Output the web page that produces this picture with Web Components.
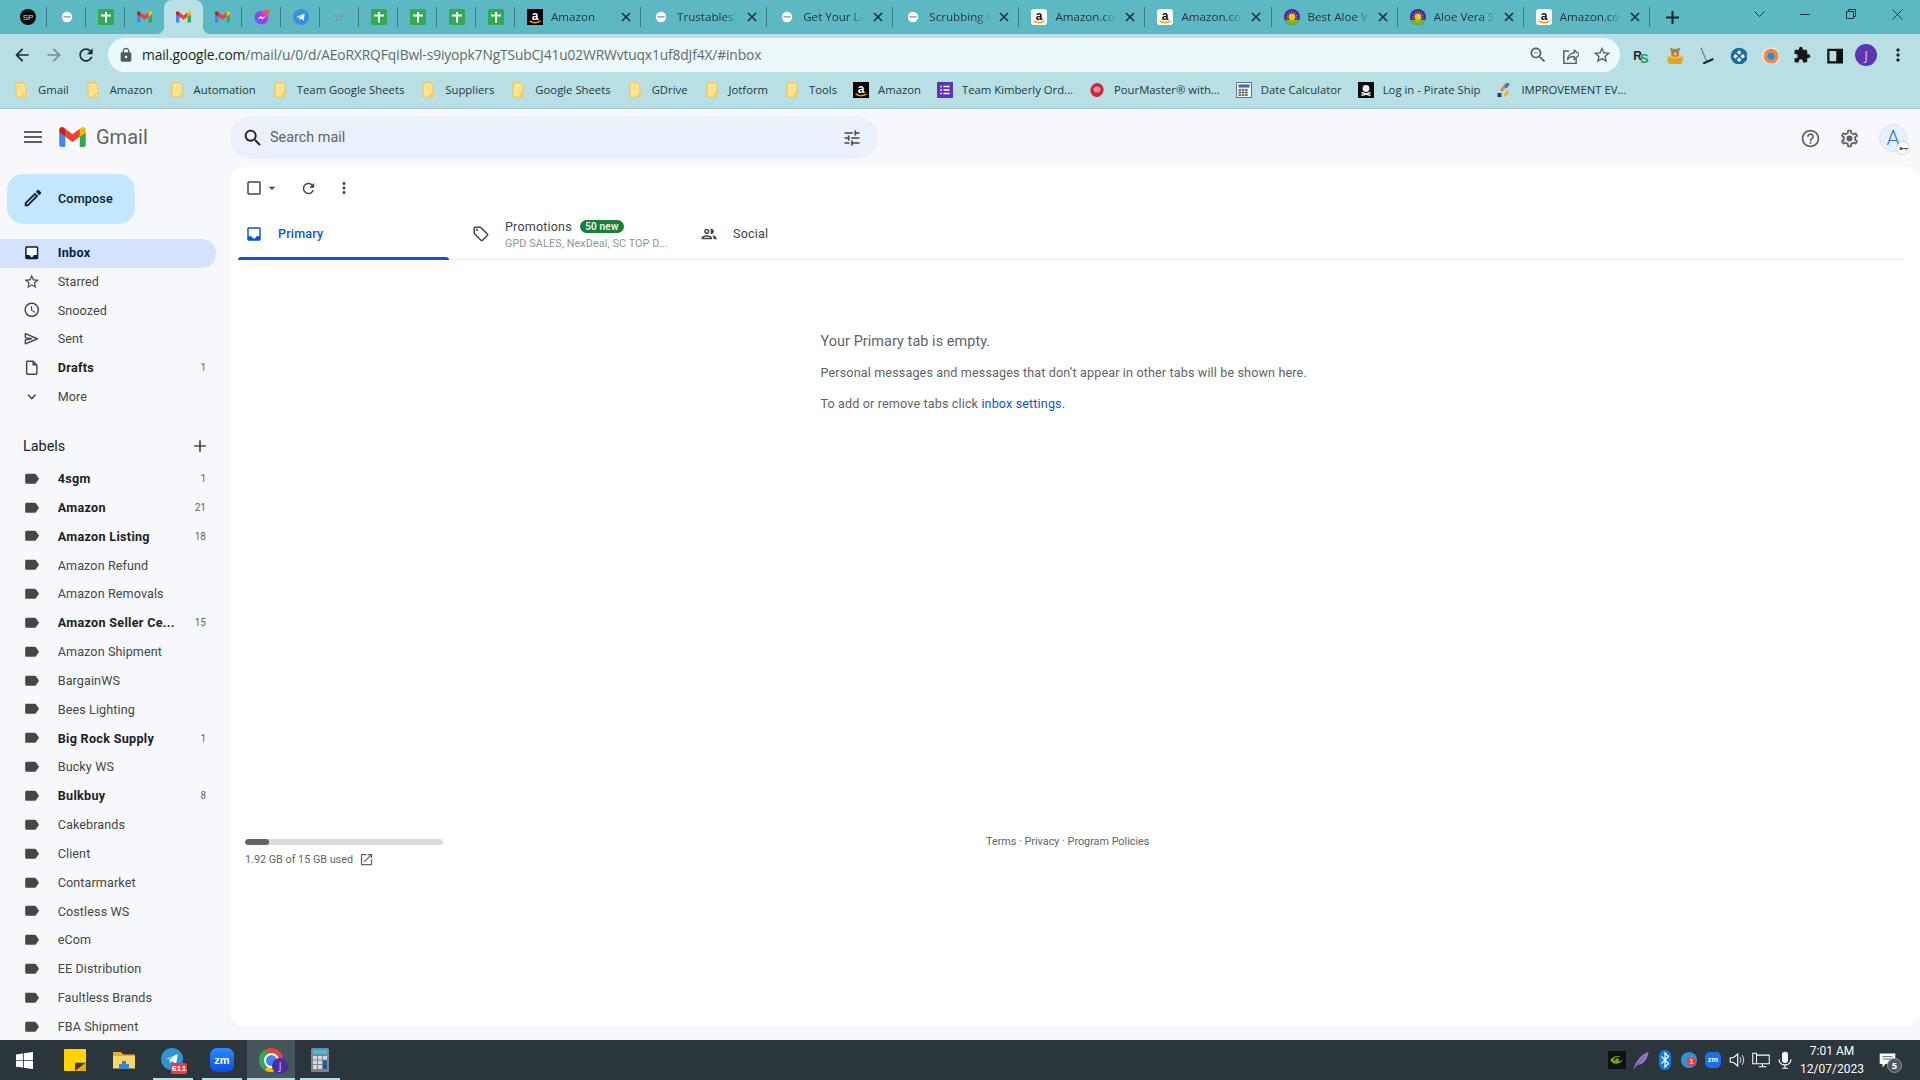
<!DOCTYPE html>
<html lang="en">
<head>
<meta charset="utf-8">
<title>Gmail</title>
<style>
  html, body { margin: 0; height: 100%; }
  body { width: 1920px; height: 1080px; overflow: hidden; display: flex; flex-direction: column; font-family: Roboto, "Liberation Sans", sans-serif; background: #f6f8fc; }
</style>
</head>
<body>
<chrome-tabstrip></chrome-tabstrip>
<chrome-toolbar></chrome-toolbar>
<chrome-bookmarks></chrome-bookmarks>
<gmail-app></gmail-app>
<win-taskbar></win-taskbar>

<script>
// material icon paths
const P = {
  menu: 'M3 18h18v-2H3v2zm0-5h18v-2H3v2zm0-7v2h18V6H3z',
  search: 'M15.5 14h-.79l-.28-.27C15.41 12.59 16 11.11 16 9.5 16 5.91 13.09 3 9.5 3S3 5.91 3 9.5 5.91 16 9.5 16c1.61 0 3.09-.59 4.23-1.57l.27.28v.79l5 4.99L20.49 19l-4.99-5zm-6 0C7.01 14 5 11.99 5 9.5S7.01 5 9.5 5 14 7.01 14 9.5 11.99 14 9.5 14z',
  tune: 'M3 17v2h6v-2H3zM3 5v2h10V5H3zm10 16v-2h8v-2h-8v-2h-2v6h2zM7 9v2H3v2h4v2h2V9H7zm14 4v-2H11v2h10zm-6-4h2V7h4V5h-4V3h-2v6z',
  help: 'M11 18h2v-2h-2v2zm1-16C6.48 2 2 6.48 2 12s4.48 10 10 10 10-4.48 10-10S17.52 2 12 2zm0 18c-4.41 0-8-3.59-8-8s3.59-8 8-8 8 3.59 8 8-3.59 8-8 8zm0-14c-2.21 0-4 1.79-4 4h2c0-1.1.9-2 2-2s2 .9 2 2c0 2-3 1.75-3 5h2c0-2.25 3-2.5 3-5 0-2.21-1.79-4-4-4z',
  settings: 'M19.43 12.98c.04-.32.07-.64.07-.98 0-.34-.03-.66-.07-.98l2.11-1.65c.19-.15.24-.42.12-.64l-2-3.46c-.09-.16-.26-.25-.44-.25-.06 0-.12.01-.17.03l-2.49 1c-.52-.4-1.08-.73-1.69-.98l-.38-2.65C14.46 2.18 14.25 2 14 2h-4c-.25 0-.46.18-.49.42l-.38 2.65c-.61.25-1.17.59-1.69.98l-2.49-1c-.06-.02-.12-.03-.18-.03-.17 0-.34.09-.43.25l-2 3.46c-.13.22-.07.49.12.64l2.11 1.65c-.04.32-.07.65-.07.98 0 .33.03.66.07.98l-2.11 1.65c-.19.15-.24.42-.12.64l2 3.46c.09.16.26.25.44.25.06 0 .12-.01.17-.03l2.49-1c.52.4 1.08.73 1.69.98l.38 2.65c.03.24.24.42.49.42h4c.25 0 .46-.18.49-.42l.38-2.65c.61-.25 1.17-.59 1.69-.98l2.49 1c.06.02.12.03.18.03.17 0 .34-.09.43-.25l2-3.46c.12-.22.07-.49-.12-.64l-2.11-1.65zm-1.98-1.71c.04.31.05.52.05.73 0 .21-.02.43-.05.73l-.14 1.13.89.7 1.08.84-.7 1.21-1.27-.51-1.04-.42-.9.68c-.43.32-.84.56-1.25.73l-1.06.43-.16 1.13-.2 1.35h-1.4l-.19-1.35-.16-1.13-1.06-.43c-.43-.18-.83-.41-1.23-.71l-.91-.7-1.06.43-1.27.51-.7-1.21 1.08-.84.89-.7-.14-1.13c-.03-.31-.05-.54-.05-.74s.02-.43.05-.73l.14-1.13-.89-.7-1.08-.84.7-1.21 1.27.51 1.04.42.9-.68c.43-.32.84-.56 1.25-.73l1.06-.43.16-1.13.2-1.35h1.39l.19 1.35.16 1.13 1.06.43c.43.18.83.41 1.23.71l.91.7 1.06-.43 1.27-.51.7 1.21-1.07.85-.89.7.14 1.13zM12 8.5a3.5 3.5 0 1 0 0 7 3.5 3.5 0 0 0 0-7z',
  edit: 'M3 17.25V21h3.75L17.81 9.94l-3.75-3.75L3 17.25zM5.92 19H5v-.92l9.06-9.06.92.92L5.92 19zM20.71 5.63l-2.34-2.34c-.2-.2-.45-.29-.71-.29s-.51.1-.7.29l-1.83 1.83 3.75 3.75 1.83-1.83c.39-.39.39-1.02 0-1.41z',
  inbox: 'M19 3H5c-1.1 0-2 .9-2 2v14c0 1.1.9 2 2 2h14c1.1 0 2-.9 2-2V5c0-1.1-.9-2-2-2zm0 12h-4c0 1.66-1.35 3-3 3s-3-1.34-3-3H5V5h14v10z',
  star: 'M22 9.24l-7.19-.62L12 2 9.19 8.63 2 9.24l5.46 4.73L5.82 21 12 17.27 18.18 21l-1.63-7.03L22 9.24zM12 15.4l-3.76 2.27 1-4.28-3.32-2.88 4.38-.38L12 6.1l1.71 4.04 4.38.38-3.32 2.88 1 4.28L12 15.4z',
  clock: 'M11.99 2C6.47 2 2 6.48 2 12s4.47 10 9.99 10C17.52 22 22 17.52 22 12S17.52 2 11.99 2zM12 20c-4.42 0-8-3.58-8-8s3.58-8 8-8 8 3.58 8 8-3.58 8-8 8zm.5-13H11v6l5.25 3.15.75-1.23-4.5-2.67z',
  draft: 'M14 2H6c-1.1 0-1.99.9-1.99 2L4 20c0 1.1.89 2 1.99 2H18c1.1 0 2-.9 2-2V8l-6-6zM6 20V4h7v5h5v11H6z',
  more: 'M16.59 8.59L12 13.17 7.41 8.59 6 10l6 6 6-6z',
  add: 'M19 13h-6v6h-2v-6H5v-2h6V5h2v6h6v2z',
  label: 'M17.63 5.84C17.27 5.33 16.67 5 16 5L5 5.01C3.9 5.01 3 5.9 3 7v10c0 1.1.9 1.99 2 1.99L16 19c.67 0 1.27-.33 1.63-.84L22 12l-4.37-6.16z',
  check: 'M19 5v14H5V5h14m0-2H5c-1.1 0-2 .9-2 2v14c0 1.1.9 2 2 2h14c1.1 0 2-.9 2-2V5c0-1.1-.9-2-2-2z',
  drop: 'M7 10l5 5 5-5z',
  refresh: 'M17.65 6.35C16.2 4.9 14.21 4 12 4c-4.42 0-7.99 3.58-7.99 8s3.57 8 7.99 8c3.73 0 6.84-2.55 7.73-6h-2.08c-.82 2.33-3.04 4-5.65 4-3.31 0-6-2.69-6-6s2.69-6 6-6c1.66 0 3.14.69 4.22 1.78L13 11h7V4l-2.35 2.35z',
  dots: 'M12 8c1.1 0 2-.9 2-2s-.9-2-2-2-2 .9-2 2 .9 2 2 2zm0 2c-1.1 0-2 .9-2 2s.9 2 2 2 2-.9 2-2-.9-2-2-2zm0 6c-1.1 0-2 .9-2 2s.9 2 2 2 2-.9 2-2-.9-2-2-2z',
  offer: 'M21.41 11.58l-9-9C12.05 2.22 11.55 2 11 2H4c-1.1 0-2 .9-2 2v7c0 .55.22 1.05.59 1.42l9 9c.36.36.86.58 1.41.58s1.05-.22 1.41-.59l7-7c.37-.36.59-.86.59-1.41s-.23-1.06-.59-1.42zM13 20.01L4 11V4h7v-.01l9 8.99-7 7.02zM6.5 5A1.5 1.5 0 1 0 6.5 8 1.5 1.5 0 0 0 6.5 5z',
  people: 'M9 13.75c-2.34 0-7 1.17-7 3.5V19h14v-1.75c0-2.33-4.66-3.5-7-3.5zM4.34 17c.84-.58 2.87-1.25 4.66-1.25s3.82.67 4.66 1.25H4.34zM9 12c1.93 0 3.5-1.57 3.5-3.5S10.93 5 9 5 5.5 6.57 5.5 8.5 7.07 12 9 12zm0-5c.83 0 1.5.67 1.5 1.5S9.83 10 9 10s-1.5-.67-1.5-1.5S8.17 7 9 7zm7.04 6.81c1.16.84 1.96 1.96 1.96 3.44V19h4v-1.75c0-2.02-3.5-3.17-5.96-3.44zM15 12c1.93 0 3.5-1.57 3.5-3.5S16.93 5 15 5c-.54 0-1.04.13-1.5.35.63.89 1 1.98 1 3.15s-.37 2.26-1 3.15c.46.22.96.35 1.5.35z',
  open: 'M19 19H5V5h7V3H5c-1.11 0-2 .9-2 2v14c0 1.1.89 2 2 2h14c1.1 0 2-.9 2-2v-7h-2v7zM14 3v2h3.59l-9.83 9.83 1.41 1.41L19 6.41V10h2V3h-7z',
  back: 'M20 11H7.83l5.59-5.59L12 4l-8 8 8 8 1.41-1.41L7.83 13H20v-2z',
  forward: 'M12 4l-1.41 1.41L16.17 11H4v2h12.17l-5.58 5.59L12 20l8-8z',
  lock: 'M18 8h-1V6c0-2.76-2.24-5-5-5S7 3.24 7 6v2H6c-1.1 0-2 .9-2 2v10c0 1.1.9 2 2 2h12c1.1 0 2-.9 2-2V10c0-1.1-.9-2-2-2zm-6 9c-1.1 0-2-.9-2-2s.9-2 2-2 2 .9 2 2-.9 2-2 2zm3.1-9H8.9V6c0-1.71 1.39-3.1 3.1-3.1 1.71 0 3.1 1.39 3.1 3.1v2z',
  puzzle: 'M20.5 11H19V7c0-1.1-.9-2-2-2h-4V3.5C13 2.12 11.88 1 10.5 1S8 2.12 8 3.5V5H4c-1.1 0-1.99.9-1.99 2v3.8H3.5c1.49 0 2.7 1.21 2.7 2.7s-1.21 2.7-2.7 2.7H2V20c0 1.1.9 2 2 2h3.8v-1.5c0-1.49 1.21-2.7 2.7-2.7 1.49 0 2.7 1.21 2.7 2.7V22H17c1.1 0 2-.9 2-2v-4h1.5c1.38 0 2.5-1.12 2.5-2.5S21.88 11 20.5 11z',
  zoomout: 'M15.5 14h-.79l-.28-.27C15.41 12.59 16 11.11 16 9.5 16 5.91 13.09 3 9.5 3S3 5.91 3 9.5 5.91 16 9.5 16c1.61 0 3.09-.59 4.23-1.57l.27.28v.79l5 4.99L20.49 19l-4.99-5zm-6 0C7.01 14 5 11.99 5 9.5S7.01 5 9.5 5 14 7.01 14 9.5 11.99 14 9.5 14zM7 9h5v1H7z'
};
const ic = (n, s = 20, c = '#444746') => n === 'send'
  ? `<svg width="${s}" height="${s}" viewBox="0 0 24 24" style="display:block;flex:none"><path d="M3.2 5l16.6 7-16.6 7v-5.4l8.3-1.6-8.3-1.6z" fill="none" stroke="${c}" stroke-width="1.9" stroke-linejoin="round"/></svg>`
  : `<svg width="${s}" height="${s}" viewBox="0 0 24 24" fill="${c}" fill-rule="evenodd" style="display:block;flex:none"><path d="${P[n]}"/></svg>`;
const box = (s, inner) => `<svg width="${s}" height="${s}" viewBox="0 0 16 16" style="display:block;flex:none">${inner}</svg>`;

const mLogo = (w, h) => `<svg width="${w}" height="${h}" viewBox="0 0 256 193" style="display:block;flex:none"><path fill="#4285F4" d="M58.182 192.05V93.14L27.507 65.077 0 49.504v125.091c0 9.658 7.825 17.455 17.455 17.455h40.727Z"/><path fill="#34A853" d="M197.818 192.05h40.727c9.659 0 17.455-7.826 17.455-17.455V49.505l-31.156 17.837-27.026 25.798v98.91Z"/><path fill="#EA4335" d="m58.182 93.14-4.174-38.647 4.174-36.989L128 69.868l69.818-52.364 4.669 34.992-4.669 40.644L128 145.504z"/><path fill="#FBBC04" d="M197.818 17.504V93.14L256 49.504V26.231c0-21.585-24.64-33.89-41.89-20.945l-16.292 12.218Z"/><path fill="#C5221F" d="m0 49.504 26.759 20.07L58.182 93.14V17.504L41.89 5.286C24.61-7.66 0 4.646 0 26.23v23.273Z"/></svg>`;
const amazon = bg => {
  const fg = bg === '#000' ? '#fff' : '#111';
  return box(16, `<rect width="16" height="16" rx="${bg === '#000' ? 0 : 3}" fill="${bg}"/><text x="8" y="10.5" text-anchor="middle" font-family="Liberation Sans" font-weight="700" font-size="12" fill="${fg}">a</text><path d="M2.5 11.8c3.5 2.4 7.5 2.4 11 0" fill="none" stroke="#f90" stroke-width="1.4"/>`);
};
const FAV = {
  sp: box(16, '<circle cx="8" cy="8" r="8" fill="#0c0c0c"/><text x="8" y="11" text-anchor="middle" font-family="Liberation Sans" font-size="8" fill="#ddd">SP</text>'),
  globe: box(16, '<circle cx="8" cy="8" r="5.2" fill="#fff"/><rect x="4.5" y="7.3" width="7" height="1.2" fill="#888"/>'),
  sheet: box(16, '<rect width="16" height="16" rx="1.5" fill="#34a853"/><rect x="7" y="3" width="2" height="10.5" fill="#fff"/><rect x="3" y="5.5" width="10" height="2" fill="#fff"/>'),
  gmail: mLogo(15, 12),
  messenger: box(16, '<defs><linearGradient id="mg" x1="0" y1="1" x2="1" y2="0"><stop offset="0" stop-color="#2e7bff"/><stop offset=".5" stop-color="#a334fa"/><stop offset="1" stop-color="#ff5e7a"/></linearGradient></defs><circle cx="7.5" cy="8.5" r="7" fill="url(#mg)"/><path d="M3.5 10.5l3-3.5 2 1.6 3-1.6-3 3.6-2-1.6z" fill="#fff"/><circle cx="13" cy="3" r="2.6" fill="#f0544f"/>'),
  telegram: box(16, '<circle cx="8" cy="8" r="8" fill="#3a8fde"/><path d="M3.2 8l8.6-3.6-1.3 7.2-2.8-2-1.3 1.4-.3-2.3 3.7-3-4.7 2.7z" fill="#fff"/>'),
  faint: box(16, '<path d="M3 5l2 6 2-5 2 5 2-6" fill="none" stroke="#6f9aa0" stroke-width="1.2"/><path d="M2 9h12" stroke="#8fb6ba" stroke-width=".8"/>'),
  amazon: amazon('#fff'),
  amazonb: amazon('#000'),
  aloe: box(16, '<circle cx="8" cy="8" r="8" fill="#4a2a8f"/><path d="M.6 11h14.8A8 8 0 0 1 .6 11z" fill="#6fb52f"/><circle cx="8" cy="8" r="3.4" fill="#f5c518"/><circle cx="8" cy="8" r="5" fill="none" stroke="#f5c518" stroke-width="1" stroke-dasharray="1 1.2"/>')
};
const folder = box(16, '<path d="M3 .8h7.5l2.5 2.5v11.9H3z" fill="#ffe38f" stroke="#f2c14e" stroke-width="1"/><path d="M10.5 15v-3H13" fill="none" stroke="#f2c14e"/>');
const BM = {
  folder,
  amazon: amazon('#000'),
  forms: box(16, '<rect width="16" height="16" fill="#5e35b1"/><path d="M6.5 4.5h6M6.5 8h6M6.5 11.5h6" stroke="#fff" stroke-width="1.6"/><path d="M3.2 4.5h1.6M3.2 8h1.6M3.2 11.5h1.6" stroke="#fff" stroke-width="1.6"/>'),
  pour: box(16, '<ellipse cx="8" cy="8" rx="6.5" ry="7" fill="#c8283c" transform="rotate(25 8 8)"/><ellipse cx="8" cy="7.5" rx="3.6" ry="3" fill="#e98a95"/>'),
  calc: box(16, '<rect x=".5" y=".5" width="15" height="15" fill="#f3f3f3" stroke="#6f7478"/><rect x="2.5" y="2.5" width="11" height="3" fill="#2f6ea8"/><path d="M2.5 8h2.5m.8 0h2.5m.8 0h2.5M2.5 10.5h2.5m.8 0h2.5m.8 0h2.5M2.5 13h2.5m.8 0h2.5m.8 0h2.5" stroke="#444" stroke-width="1.5"/>'),
  pirate: box(16, '<rect width="16" height="16" fill="#0d0d0d"/><circle cx="8" cy="6.5" r="3.4" fill="#eee"/><path d="M3.5 10.5l9 3M12.5 10.5l-9 3" stroke="#eee" stroke-width="1.6"/>'),
  improve: box(16, '<rect x="3" y="3.6" width="10" height="3.2" rx="1.6" fill="#f5802a" transform="rotate(-50 8 5)"/><rect x="8" y="1.8" width="6" height="3.2" rx="1.6" fill="#2f7be5" transform="rotate(-50 11 3.4)"/><rect x="7" y="10" width="7" height="3.2" rx="1.6" fill="#f5b32a" transform="rotate(-50 10.5 11.6)"/><rect x="1.5" y="11" width="4" height="4" fill="#1c3f8c"/>')
};

class Base extends HTMLElement {
  connectedCallback() {
    if (this.shadowRoot) return;
    this.attachShadow({ mode: 'open' });
    this.shadowRoot.innerHTML = `<style>${this.constructor.css}</style>${this.render()}`;
  }
  attr(n, d = '') { return this.getAttribute(n) ?? d; }
}

class ChromeTab extends Base {
  static css = `
    :host { display: flex; align-items: center; height: 34px; position: relative; flex: none; box-sizing: border-box; width: 39px; justify-content: center; font: 11.6px "Open Sans", sans-serif; color: #24383c; }
    :host([wide]) { width: 126.1px; justify-content: flex-start; padding-left: 12px; }
    :host([sep])::after { content: ""; position: absolute; right: 0; top: 7px; height: 20px; width: 1px; background: #3d7b82; }
    :host([active]) { background: #b8e0e4; border-radius: 8px 8px 0 0; }
    :host([active])::before { content: ""; position: absolute; left: -8px; right: -8px; bottom: 0; height: 8px; z-index: -1;
      background: radial-gradient(circle at 0 0, transparent 8px, #b8e0e4 8.5px) left/8px 8px no-repeat, radial-gradient(circle at 100% 0, transparent 8px, #b8e0e4 8.5px) right/8px 8px no-repeat; }
    .t { width: 64px; margin: 0 0 2px 8px; white-space: nowrap; overflow: hidden; -webkit-mask-image: linear-gradient(90deg, #000 74%, transparent 96%); mask-image: linear-gradient(90deg, #000 74%, transparent 96%); }
    .x { margin-left: 6px; }
    .x svg { display: block; }
  `;
  render() {
    const f = FAV[this.attr('fav')];
    if (!this.hasAttribute('wide')) return f;
    return `${f}<span class="t"><slot></slot></span><span class="x"><svg width="10" height="10" viewBox="0 0 10 10"><path d="M1 1l8 8M9 1l-8 8" stroke="#20343a" stroke-width="1.7"/></svg></span>`;
  }
}

class ChromeTabstrip extends Base {
  static css = `
    :host { display: flex; height: 34px; background: #5cb8c2; padding-left: 8px; flex: none; isolation: isolate; }
    .new { margin-left: 11px; width: 24px; display: flex; align-items: center; justify-content: center; }
    .end { margin-left: auto; display: flex; align-items: center; }
    .w { width: 46px; height: 28px; display: flex; align-items: center; justify-content: center; margin-bottom: 6px; }
    .chev { margin-right: 9px; width: 28px; }
    svg { display: block; }
  `;
  render() {
    const pins = [['sp', 1], ['globe', 1], ['sheet', 1], ['gmail', 0], ['gmail', 0, 1], ['gmail', 1], ['messenger', 1], ['telegram', 1], ['faint', 1], ['sheet', 1], ['sheet', 1], ['sheet', 1], ['sheet', 1]];
    const wide = [['amazonb', 'Amazon'], ['globe', 'Trustables\''], ['globe', 'Get Your La'], ['globe', 'Scrubbing t'], ['amazon', 'Amazon.co'], ['amazon', 'Amazon.co'], ['aloe', 'Best Aloe V'], ['aloe', 'Aloe Vera S'], ['amazon', 'Amazon.co']];
    const s = 'fill="none" stroke="#20343a" stroke-width="1"';
    return pins.map(p => `<chrome-tab fav="${p[0]}" ${p[1] ? 'sep' : ''} ${p[2] ? 'active' : ''}></chrome-tab>`).join('')
      + wide.map(t => `<chrome-tab wide sep fav="${t[0]}">${t[1]}</chrome-tab>`).join('')
      + `<span class="new"><svg width="13" height="13" viewBox="0 0 13 13"><path d="M6.5 0v13M0 6.5h13" stroke="#14262a" stroke-width="2"/></svg></span>
      <span class="end">
        <span class="w chev"><svg width="11" height="6" viewBox="0 0 11 6"><path d="M.5.5l5 5 5-5" ${s}/></svg></span>
        <span class="w"><svg width="10" height="10" viewBox="0 0 10 10"><path d="M0 5.5h10" ${s}/></svg></span>
        <span class="w"><svg width="10" height="10" viewBox="0 0 10 10"><path d="M.5 2.5h7v7h-7zM2.5 2.5v-2h7v7h-2" ${s}/></svg></span>
        <span class="w"><svg width="11" height="11" viewBox="0 0 11 11"><path d="M.5.5l10 10M10.5.5l-10 10" ${s}/></svg></span>
      </span>`;
  }
}

class ChromeToolbar extends Base {
  static css = `
    :host { display: flex; align-items: flex-end; height: 38px; background: #b8e0e4; padding-left: 6px; flex: none; }
    .b { width: 32px; height: 34px; display: flex; align-items: center; justify-content: center; flex: none; }
    .url { margin-left: 6px; width: 1512px; height: 34px; box-sizing: border-box; border-radius: 17px; background: #ecf8f9; display: flex; align-items: center; padding: 0 2px 1px 10px; flex: none; }
    .addr { margin-left: 8px; flex: 1; font: 13.8px "Open Sans", sans-serif; letter-spacing: -.13px; color: #5e6a6c; white-space: nowrap; }
    .addr b { font-weight: 400; color: #1d2526; }
    .ext { margin-left: 6px; display: flex; }
    .rs { font: 700 12px "Liberation Sans", sans-serif; color: #222; position: relative; }
    .rs i { font-style: normal; color: #1a9a5c; position: relative; left: -2px; top: 3px; font-size: 13px; }
    .av { width: 22px; height: 22px; border-radius: 50%; background: #5e35b1; color: #d9cdf3; font: 12px "Open Sans", sans-serif; display: flex; align-items: center; justify-content: center; }
  `;
  render() {
    const fox = box(18, '<path d="M2 9.5h14l-1 6c-3 1.6-9 1.6-12 0z" fill="#e0a327"/><ellipse cx="9" cy="9.5" rx="7" ry="1.8" fill="#f2bd45"/><circle cx="9" cy="6" r="3.6" fill="#b07a43"/><circle cx="5.8" cy="3" r="1.2" fill="#b07a43"/><circle cx="12.2" cy="3" r="1.2" fill="#b07a43"/><circle cx="9" cy="7" r="1.4" fill="#e8c9a0"/>');
    const broom = box(18, '<path d="M3.5 1.5l5 12" stroke="#6d7a7d" stroke-width="1"/><path d="M5.5 15.5l9-4" stroke="#1c2528" stroke-width="2"/>');
    const blue = box(18, '<circle cx="9" cy="9" r="7.5" fill="#1f6c9e"/><path d="M9 3.8l2 2-2 2-2-2zM9 10.2l2 2-2 2-2-2zM5.8 7l2 2-2 2-2-2zM12.2 7l2 2-2 2-2-2z" fill="#fff"/>');
    const orange = box(18, '<circle cx="9" cy="9" r="8" fill="#f7e4d6"/><circle cx="9" cy="9" r="6.6" fill="#e8894e"/><circle cx="9" cy="9" r="3.1" fill="#1d8fe0"/>');
    const side = box(18, '<path d="M2 2.5h14v13H2zM4 4.5v9h6v-9z" fill="#111" fill-rule="evenodd"/>');
    const share = box(18, '<path d="M7 4.5H2.5v11h11V11" fill="none" stroke="#555f61" stroke-width="1.3"/><path d="M5.8 12c.3-3.8 3-5.8 6-5.8V3.500L16.500 7.700 11.800 12V9.200c-2.400 0-4.600.8-6 2.800z" fill="none" stroke="#555f61" stroke-width="1.2" stroke-linejoin="round"/>');
    return `<span class="b">${ic('back', 20, '#1f2a2c')}</span><span class="b">${ic('forward', 20, '#7a8a8d')}</span><span class="b">${ic('refresh', 20, '#1f2a2c')}</span>
      <div class="url">${ic('lock', 16, '#4e5a5c')}<span class="addr"><b>mail.google.com</b>/mail/u/0/d/AEoRXRQFqIBwl-s9iyopk7NgTSubCJ41u02WRWvtuqx1uf8dJf4X/#inbox</span>
        <span class="b">${ic('zoomout', 20, '#555f61')}</span><span class="b">${share}</span><span class="b">${ic('star', 20, '#555f61')}</span></div>
      <div class="ext"><span class="b"><span class="rs">R<i>S</i></span></span><span class="b">${fox}</span><span class="b">${broom}</span><span class="b">${blue}</span><span class="b">${orange}</span><span class="b">${ic('puzzle', 18, '#15191a')}</span><span class="b">${side}</span><span class="b"><span class="av">J</span></span><span class="b">${ic('dots', 20, '#1f2a2c')}</span></div>`;
  }
}

class BookMark extends Base {
  static css = `
    :host { display: inline-flex; align-items: center; gap: 9px; flex: none; box-sizing: border-box; }
    span { white-space: nowrap; margin-bottom: 2px; }
  `;
  render() { return `${BM[this.attr('i', 'folder')]}<span><slot></slot></span>`; }
}

class ChromeBookmarks extends Base {
  static css = `
    :host { display: flex; align-items: center; gap: 16px; height: 37px; box-sizing: border-box; padding-left: 13px; background: #b8e0e4; border-bottom: 1px solid #9fc6ca; flex: none; font: 11.3px "Open Sans", sans-serif; color: #23383c; }
  `;
  render() {
    const items = [['folder', 'Gmail'], ['folder', 'Amazon'], ['folder', 'Automation'], ['folder', 'Team Google Sheets'], ['folder', 'Suppliers'], ['folder', 'Google Sheets'], ['folder', 'GDrive'], ['folder', 'Jotform'], ['folder', 'Tools'], ['amazon', 'Amazon'], ['forms', 'Team Kimberly Ord...'], ['pour', 'PourMaster® with...'], ['calc', 'Date Calculator'], ['pirate', 'Log in - Pirate Ship'], ['improve', 'IMPROVEMENT EV...']];
    return items.map(b => `<book-mark i="${b[0]}">${b[1]}</book-mark>`).join('');
  }
}

class NavRow extends Base {
  static css = `
    :host { display: flex; align-items: center; height: 28.85px; width: 216px; box-sizing: border-box; padding: 0 10px 2px 22px; font-size: 12.6px; color: #444746; flex: none; border-radius: 0 15px 15px 0; letter-spacing: .1px; }
    :host([bold]) { font-weight: 700; color: #202124; letter-spacing: .3px; }
    :host([active]) { background: #d3e3fd; color: #041e49; font-weight: 700; letter-spacing: .3px; }
    .i { width: 20px; height: 20px; margin-right: 15.7px; flex: none; position: relative; display: flex; align-items: center; justify-content: center; }
    .n { flex: 1; white-space: nowrap; overflow: hidden; }
    .c { font-size: 10px; font-weight: 400; color: #5f6368; letter-spacing: 0; }
    .w { position: absolute; left: 5px; top: 5px; width: 10px; height: 8px; background: #fff; }
    svg { position: relative; }
  `;
  render() {
    const on = this.hasAttribute('active');
    return `<span class="i">${on ? '<span class="w"></span>' : ''}${ic(this.attr('i', 'label'), 17.5, on ? '#041e49' : '#444746')}</span><span class="n"><slot></slot></span><span class="c">${this.attr('count')}</span>`;
  }
}

class GmailSidebar extends Base {
  static css = `
    :host { display: flex; flex-direction: column; overflow: hidden; min-height: 0; }
    .compose { margin: 7px 0 15px 7px; width: 128px; height: 50px; flex: none; border-radius: 16px; background: #c2e7ff; display: flex; align-items: center; box-sizing: border-box; padding: 0 0 2px 15px; gap: 14px; font-size: 12.6px; font-weight: 500; color: #001d35; letter-spacing: .15px; }
    .labels { margin: 21px 0 4px; height: 28px; flex: none; display: flex; align-items: center; justify-content: space-between; padding: 0 6px 2px 23px; width: 216px; box-sizing: border-box; font-size: 14.4px; color: #202124; }
  `;
  render() {
    const nav = [['inbox', 'Inbox', '', 'active'], ['star', 'Starred'], ['clock', 'Snoozed'], ['send', 'Sent'], ['draft', 'Drafts', '1', 'bold'], ['more', 'More']];
    const labels = [['4sgm', 1], ['Amazon', 21], ['Amazon Listing', 18], ['Amazon Refund'], ['Amazon Removals'], ['Amazon Seller Ce...', 15], ['Amazon Shipment'], ['BargainWS'], ['Bees Lighting'], ['Big Rock Supply', 1], ['Bucky WS'], ['Bulkbuy', 8], ['Cakebrands'], ['Client'], ['Contarmarket'], ['Costless WS'], ['eCom'], ['EE Distribution'], ['Faultless Brands'], ['FBA Shipment']];
    return `<div class="compose">${ic('edit', 22, '#041e49')}<span>Compose</span></div>`
      + nav.map(n => `<nav-row i="${n[0]}" count="${n[2] || ''}" ${n[3] || ''}>${n[1]}</nav-row>`).join('')
      + `<div class="labels"><span>Labels</span>${ic('add', 20, '#444746')}</div>`
      + labels.map(l => `<nav-row i="label" count="${l[1] || ''}" ${l[1] ? 'bold' : ''}>${l[0]}</nav-row>`).join('');
  }
}

class GmailTopbar extends Base {
  static css = `
    :host { grid-column: 1 / -1; display: flex; align-items: flex-start; height: 58px; }
    .brand { width: 230px; height: 58px; flex: none; display: flex; align-items: center; padding: 0 0 2px 21px; box-sizing: border-box; }
    .brand span { font-size: 20px; color: #5f6368; margin-left: 10px; }
    .search { margin-top: 7px; width: 648px; height: 43px; flex: none; box-sizing: border-box; background: #eaf1fb; border-radius: 22px; display: flex; align-items: center; padding: 0 16px 0 12px; font-size: 14.4px; color: #5f6368; }
    .search span { margin-left: 6px; flex: 1; }
    .right { margin-left: auto; height: 58px; display: flex; align-items: center; padding: 0 13px 1px 0; }
    .r { width: 40px; display: flex; justify-content: center; }
    .av { margin-left: 9px; width: 28px; height: 28px; box-sizing: border-box; position: relative; border-radius: 50%; background: #e8f0fe; border: 1px solid #dfe3ea; color: #2f6fe4; font: 300 21px/26px Roboto, sans-serif; text-align: center; }
    .key { position: absolute; right: -3px; bottom: -3px; width: 12px; height: 12px; border-radius: 50%; background: #fff; box-shadow: 0 0 2px #999; display: flex; align-items: center; justify-content: center; }
  `;
  render() {
    return `<div class="brand">${ic('menu', 24, '#5f6368')}<span style="margin-left:14px">${mLogo(27, 20)}</span><span>Gmail</span></div>
      <div class="search">${ic('search', 22, '#202124')}<span>Search mail</span>${ic('tune', 20, '#444746')}</div>
      <div class="right"><span class="r">${ic('help', 21, '#5f6368')}</span><span class="r" style="margin-left:-1px;margin-right:1px">${ic('settings', 21, '#5f6368')}</span>
        <div class="av">A<span class="key"><svg width="9" height="5" viewBox="0 0 9 5" style="display:block"><circle cx="2" cy="2.5" r="1.6" fill="#555"/><path d="M3 2.5h6M7 2.5v2" stroke="#555"/></svg></span></div></div>`;
  }
}

class GmailTab extends Base {
  static css = `
    :host { display: flex; align-items: center; height: 51px; box-sizing: border-box; flex: none; position: relative; font-size: 12.6px; color: #444746; letter-spacing: .15px; }
    :host([active]) { color: #0b57d0; font-weight: 500; }
    :host([active])::after { content: ""; position: absolute; left: 0; right: 0; bottom: 0; height: 3px; background: #0b57d0; border-radius: 3px 3px 0 0; }
    .i { width: 18px; flex: none; position: relative; top: 1px; }
    .b { display: flex; flex-direction: column; }
  `;
  render() {
    const on = this.hasAttribute('active');
    return `<span class="i" style="margin-right:${this.attr('gap', 15)}px">${ic(this.attr('i'), 18, on ? '#0b57d0' : '#444746')}</span><div class="b"><slot></slot></div>`;
  }
}

class GmailMain extends Base {
  static css = `
    :host { display: flex; flex-direction: column; background: #fff; border-radius: 14px; margin-bottom: 14px; min-height: 0; overflow: hidden; }
    .tools { height: 42px; flex: none; display: flex; align-items: center; padding-left: 15px; }
    .tools span { display: flex; justify-content: center; flex: none; }
    .tabs { margin: 0 15px 0 8px; flex: none; display: flex; border-bottom: 1px solid #e8eaed; height: 50px; }
    .tabs gmail-tab { height: 51px; }
    .promo { display: flex; align-items: center; height: 15px; gap: 8px; margin-top: 2px; }
    .pill { width: 44px; height: 13px; background: #188038; color: #fff; border-radius: 7px; font: 500 10px/13px Roboto, sans-serif; text-align: center; letter-spacing: .2px; }
    .sub { font-size: 10.8px; color: #8f9499; white-space: nowrap; margin-top: 3px; letter-spacing: .1px; }
    .empty { margin: 73px 0 0 590.5px; color: #5f6368; font-size: 12.6px; flex: none; letter-spacing: .13px; }
    h1 { font: 400 14.4px/17px Roboto, sans-serif; margin: 0 0 15px; letter-spacing: .08px; }
    p { margin: 0 0 15.5px; line-height: 15px; }
    a { color: #0b57d0; text-decoration: none; }
    .foot { margin-top: 413px; padding-left: 15px; display: flex; font-size: 10.8px; color: #5f6368; flex: none; }
    .st { width: 198px; }
    .bar { height: 6px; border-radius: 3px; background: #dadce0; overflow: hidden; }
    .bar i { display: block; width: 24px; height: 6px; background: #5f6368; border-radius: 3px; }
    .use { display: flex; align-items: center; margin-top: 7px; gap: 6px; line-height: 14px; }
    .terms { margin-left: 543px; margin-top: -4px; line-height: 14px; }
  `;
  render() {
    return `<div class="tools"><span style="width:18px">${ic('check', 18, '#444746')}</span><span style="width:18px">${ic('drop', 16, '#444746')}</span><span style="width:54px">${ic('refresh', 17, '#444746')}</span><span style="width:18px">${ic('dots', 18, '#444746')}</span></div>
      <div class="tabs">
        <gmail-tab active i="inbox" style="width:211px;padding:0 0 3px 7px">Primary</gmail-tab>
        <gmail-tab i="offer" gap="15" style="width:234px;padding:0 0 3px 23px"><div class="promo">Promotions <span class="pill">50 new</span></div><div class="sub">GPD SALES, NexDeal, SC TOP D...</div></gmail-tab>
        <gmail-tab i="people" gap="15" style="padding:0 0 3px 17px">Social</gmail-tab>
      </div>
      <div class="empty"><h1>Your Primary tab is empty.</h1><p>Personal messages and messages that don’t appear in other tabs will be shown here.</p><p>To add or remove tabs click <a>inbox settings.</a></p></div>
      <div class="foot"><div class="st"><div class="bar"><i></i></div><div class="use"><span>1.92 GB of 15 GB used</span>${ic('open', 15, '#5f6368')}</div></div><div class="terms">Terms · Privacy · Program Policies</div></div>`;
  }
}

class GmailApp extends Base {
  static css = `
    :host { flex: 1; min-height: 0; display: grid; grid-template-columns: 230px 1fr; grid-template-rows: 58px 1fr; background: #f6f8fc; }
  `;
  render() { return '<gmail-topbar></gmail-topbar><gmail-sidebar></gmail-sidebar><gmail-main></gmail-main>'; }
}

class WinTaskbar extends Base {
  static css = `
    :host { display: flex; height: 40px; flex: none; background: #2a353c; color: #fff; }
    .start { width: 51px; display: flex; align-items: center; justify-content: center; padding-right: 3px; box-sizing: border-box; }
    .app { width: 49px; height: 40px; display: flex; align-items: center; justify-content: center; position: relative; box-sizing: border-box; flex: none; padding-right: 1px; }
    .app.run::after { content: ""; position: absolute; left: 4px; right: 5px; bottom: 0; height: 2px; background: #b5dfe3; }
    .app.on { background: #47555c; width: 48px; margin-right: 1px; padding: 0; }
    .app.on::after { left: 0; right: 0; }
    .badge { position: absolute; left: 22px; top: 23px; width: 16px; height: 11px; background: #ef3b3b; border-radius: 2px; font: 700 8px/11px "Liberation Mono", monospace; text-align: center; color: #fff; }
    .zm { width: 24px; height: 24px; border-radius: 7px; background: linear-gradient(#2d8cff, #0b4fe0); font: 700 11px/24px "Liberation Sans", sans-serif; text-align: center; color: #fff; }
    .chrome { width: 24px; height: 24px; border-radius: 50%; position: relative; background: conic-gradient(#ea4335 -30deg, #ea4335 90deg, #fbbc04 90deg, #fbbc04 210deg, #34a853 210deg, #34a853 330deg, #ea4335 330deg); display: flex; align-items: center; justify-content: center; }
    .chrome::before { content: ""; width: 11px; height: 11px; border-radius: 50%; background: #4285f4; border: 2px solid #fff; }
    .j { position: absolute; left: 25px; top: 18px; width: 16px; height: 16px; border-radius: 50%; background: #4a2ea0; font: 10px/16px "Open Sans", sans-serif; text-align: center; color: #d9cdf3; }
    .tray { margin-left: auto; display: flex; align-items: center; padding-right: 13px; }
    .t { width: 24px; display: flex; justify-content: center; flex: none; position: relative; }
    .clock { width: 70px; text-align: center; font: 12px/18px Roboto, sans-serif; }
    .notif { width: 40px; display: flex; justify-content: center; position: relative; }
    .five { position: absolute; left: 20px; top: 6px; width: 13px; height: 13px; border-radius: 50%; background: #4e5a60; border: 1px solid #8a9499; font: 700 9.5px/13px "Open Sans", sans-serif; text-align: center; }
    .tz { width: 16px; height: 16px; border-radius: 5px; background: #1d6fe8; font: 700 7.5px/16px "Liberation Sans", sans-serif; text-align: center; color: #fff; }
    .td { position: absolute; left: 10px; top: 6px; width: 9px; height: 8px; background: #ef3b3b; border-radius: 2px; font: 700 7px/8px "Liberation Sans", sans-serif; text-align: center; }
    svg { display: block; }
  `;
  render() {
    const s = (n, inner) => `<svg width="${n}" height="${n}" viewBox="0 0 24 24">${inner}</svg>`;
    const win = s(17, '<path d="M0 3.4L9.8 2v9.5H0zM11 1.8L24 0v11.5H11zM0 12.6h9.8V22L0 20.7zM11 12.6h13V24l-13-1.8z" fill="#fff"/>');
    const sticky = s(22, '<rect width="24" height="24" rx="1" fill="#ffd400"/><path d="M12 24V16.5c0-.8.7-1.5 1.5-1.5H24z" fill="#3a3a32"/><path d="M12 24l12-9v8a1 1 0 0 1-1 1z" fill="#e8a900"/>');
    const folderApp = s(24, '<path d="M1 4h8l2 2.5h12V20H1z" fill="#e7ac38"/><path d="M1 8h22v12.5H1z" fill="#fbd46e"/><path d="M7 16h10v5H7z" fill="#3a85d0"/><path d="M10 13h4v3h-4z" fill="#3a85d0"/>');
    const tg = '<svg width="24" height="24" viewBox="0 0 24 24"><circle cx="11" cy="11" r="11" fill="#2f93d6"/><path d="M5 11l12-5-2 10-4-3-2 2-.5-3.400 5-4-6.500 3.500z" fill="#fff"/></svg>';
    const calc = s(24, '<rect x="3" width="18" height="24" rx="1.5" fill="#79878e"/><rect x="5" y="2" width="14" height="4" fill="#37c0e6"/><path d="M5 8h4v3.500H5zM10 8h4v3.500h-4zM5 12.500h4V16H5zM10 12.500h4V16h-4zM5 17h4v4H5zM10 17h4v4h-4z" fill="#d4d9dc"/><path d="M15 8h4v3.500h-4z" fill="#d4d9dc"/><path d="M15 12.500h4V21h-4z" fill="#1f5d9a"/>');
    const nv = s(18, '<rect width="24" height="24" fill="#111"/><path d="M3 12c3-5 8-6 13-5v1c-4-1-7 0-9 3 2 3 5 4 10 2 1 0 2-1 3-2-2 4-6 6-10 6-3 0-5-2-7-5z" fill="#6eb01a"/><circle cx="12" cy="12" r="2.500" fill="#6eb01a"/>');
    const quill = s(20, '<path d="M3 23c2-8 8-17 18-21-1 8-5 15-13 16z" fill="#9a78c9"/><path d="M3 23L16 8" stroke="#5f3f92"/>');
    const bt = '<svg width="12" height="20" viewBox="0 0 12 20"><rect width="12" height="20" rx="6" fill="#1379e8"/><path d="M2.500 6.500l7 7-3.500 3.500V3l3.500 3.500-7 7" fill="none" stroke="#fff" stroke-width="1.200"/></svg>';
    const spk = s(18, '<path d="M3 9h4l6-5v16l-6-5H3z" fill="none" stroke="#fff" stroke-width="1.500"/><path d="M16 8c1.500 2.500 1.500 5.500 0 8M19 5.500c2.500 4 2.500 9 0 13" fill="none" stroke="#dfe3e5" stroke-width="1.300"/>');
    const net = s(18, '<path d="M1 3h5v14H1zM6 5.500h17V17H6M9 21h10M14 17v4" fill="none" stroke="#fff" stroke-width="1.400"/>');
    const mic = s(18, '<rect x="8" y="1" width="8" height="15" rx="4" fill="#fff"/><path d="M4 11c0 10 16 10 16 0M12 19v4M8 23h8" fill="none" stroke="#fff" stroke-width="1.500"/>');
    const bubble = s(17, '<path d="M1 2h22v15H9l-4 5v-5H1z" fill="#fff"/><path d="M5 6.500h14M5 10h14" stroke="#2a353c"/>');
    return `<div class="start">${win}</div>
      <div class="app">${sticky}</div><div class="app">${folderApp}</div>
      <div class="app run">${tg}<span class="badge">611</span></div>
      <div class="app run"><span class="zm">zm</span></div>
      <div class="app run on"><span class="chrome"></span><span class="j">J</span></div>
      <div class="app run">${calc}</div>
      <div class="tray"><span class="t">${nv}</span><span class="t">${quill}</span><span class="t">${bt}</span><span class="t"><svg width="16" height="16" viewBox="0 0 16 16"><circle cx="8" cy="8" r="8" fill="#2f93d6"/></svg><span class="td">1</span></span><span class="t"><span class="tz">zm</span></span><span class="t">${spk}</span><span class="t">${net}</span><span class="t">${mic}</span>
        <div class="clock">7:01 AM<br>12/07/2023</div>
        <div class="notif">${bubble}<span class="five">5</span></div></div>`;
  }
}

const defs = { 'chrome-tab': ChromeTab, 'chrome-tabstrip': ChromeTabstrip, 'chrome-toolbar': ChromeToolbar, 'book-mark': BookMark, 'chrome-bookmarks': ChromeBookmarks, 'nav-row': NavRow, 'gmail-sidebar': GmailSidebar, 'gmail-topbar': GmailTopbar, 'gmail-tab': GmailTab, 'gmail-main': GmailMain, 'gmail-app': GmailApp, 'win-taskbar': WinTaskbar };
for (const k in defs) customElements.define(k, defs[k]);
</script>
</body>
</html>
